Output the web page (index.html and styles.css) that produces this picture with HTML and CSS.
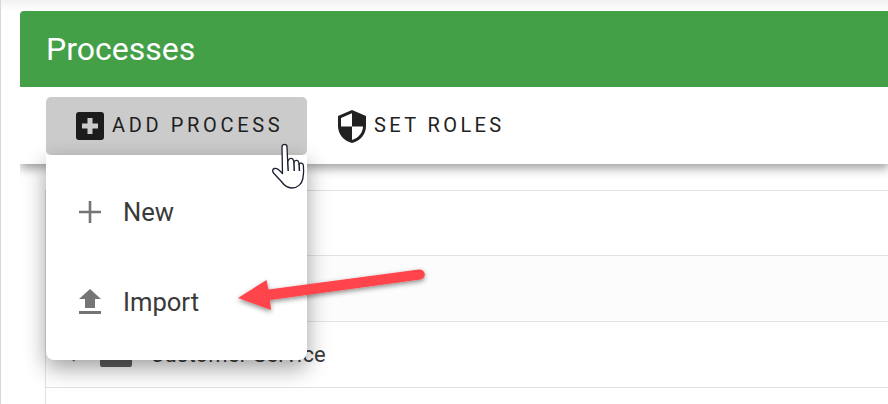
FILE: index.html
```html
<!DOCTYPE html>
<html lang="en">
<head>
<meta charset="utf-8">
<title>Processes</title>
<link rel="stylesheet" href="styles.css">
</head>
<body>
<div class="page">
  <main class="panel">
    <header class="title-bar"><h1>Processes</h1></header>
    <nav class="toolbar">
      <button class="tool tool-active">
        <svg class="tool-icon" viewBox="0 0 28 28"><rect x="0" y="0" width="28" height="28" rx="3" fill="#1c1c1c"/><path d="M11.500 6h5v5.500H22v5h-5.500V22h-5v-5.500H6v-5h5.500z" fill="#cbcbcb"/></svg>
        <span>ADD PROCESS</span>
      </button>
      <button class="tool">
        <svg class="shield-icon" viewBox="0 0 30 35"><path d="M15 1 29 7v10c0 8.500-6 15-14 17C7 32 1 25.500 1 17V7z" fill="#212121"/><path d="M15 4.300 4 9v8.500h11zM15 17.500V31c6.500-2 11-7.500 11-13.500z" fill="#fff"/></svg>
        <span>SET ROLES</span>
      </button>
    </nav>
    <section class="list">
      <div class="row row-first"></div>
      <div class="row row-alt"></div>
      <div class="row">
        <svg class="chevron" viewBox="0 0 10 14"><path d="M2 1l6 6-6 6" fill="none" stroke="#777" stroke-width="2"/></svg>
        <svg class="folder" viewBox="0 0 32 24"><path d="M2 0h10l3 3h15a2 2 0 0 1 2 2v17a2 2 0 0 1-2 2H2a2 2 0 0 1-2-2V2a2 2 0 0 1 2-2z" fill="#616161"/></svg>
        <span class="row-label">Customer Service</span>
      </div>
      <div class="row"></div>
    </section>
  </main>

  <div class="menu">
    <div class="menu-item">
      <svg class="menu-icon" viewBox="0 0 24 24"><path d="M10.700 1h2.600v9.700H23v2.600h-9.700V23h-2.600v-9.700H1v-2.600h9.700z" fill="#757575"/></svg>
      <span>New</span>
    </div>
    <div class="menu-item">
      <svg class="menu-icon" viewBox="0 0 24 24"><path d="M7 18h10V9h6L12 -1 1 9h6zM1 21h22v3H1z" fill="#757575"/></svg>
      <span>Import</span>
    </div>
  </div>

  <svg class="arrow" viewBox="0 0 200 60">
    <defs><filter id="arrow-shadow" x="-10%" y="-30%" width="120%" height="170%"><feDropShadow dx="0" dy="2" stdDeviation="2.500" flood-color="#000" flood-opacity=".45"/></filter></defs>
    <path d="M8 38 36.500 20 38.500 29.500 189 9.500a5 5 0 0 1 1.500 10L40 40 41 50z" fill="#ff444b" filter="url(#arrow-shadow)"/>
  </svg>

  <svg class="cursor" viewBox="0 0 36 46">
    <path d="M10 3c0-3.500 5-3.500 5 0l.7 15 .8-2c1.300-2.500 4.500-2 5 .5l.4 1.500c1.300-2.500 4.400-2 4.900.7l.3 1.300c1.300-1.700 4-1 4.300 1.500.4 4 .3 9-.5 13-1 5-5 9.500-11 9.500-5 0-8-3-10.500-6.500L1.500 29c-1.500-2-1-4 1-4.500 2-.5 3.500.5 5 2l3 3z" fill="#fff" stroke="#1b1f2e" stroke-width="1.300" stroke-linejoin="round"/>
    <path d="M15.700 18l.5 9M21.900 18l.4 9M27.100 20l.3 7" fill="none" stroke="#1b1f2e" stroke-width="1.500"/>
  </svg>
</div>
</body>
</html>
```

FILE: styles.css
```css
* { box-sizing: border-box; }
html, body { margin: 0; height: 100%; }
body {
  background: #fff;
  font-family: Roboto, "Liberation Sans", sans-serif;
  overflow: hidden;
}
.page {
  position: relative;
  width: 888px;
  height: 404px;
  overflow: hidden;
  padding: 11px 0 0 20px;
  border-left: 1px solid #cfdccf;
  background: linear-gradient(#f1f1f1, #fff 11px);
}
.panel {
  margin-left: -1px;
  width: 869px;
  height: 393px;
  display: flex;
  flex-direction: column;
}
.title-bar {
  height: 76px;
  background: #43a047;
  border-radius: 4px 0 0 0;
  padding-left: 26px;
  display: flex;
  align-items: center;
  flex: none;
}
.title-bar h1 {
  margin: 0;
  font-size: 32px;
  font-weight: 400;
  color: #fff;
}
.toolbar {
  height: 77px;
  background: #fff;
  flex: none;
  display: flex;
  align-items: flex-start;
  gap: 16px;
  padding: 10px 0 0 26px;
  box-shadow: 0 4px 10px rgba(0, 0, 0, .4);
  clip-path: inset(0 0 -30px 0);
  position: relative;
  z-index: 1;
}
.tool {
  height: 58px;
  border: 0;
  background: none;
  border-radius: 5px;
  display: flex;
  align-items: center;
  justify-content: center;
  gap: 7px;
  font: 400 20px Roboto, "Liberation Sans", sans-serif;
  letter-spacing: 3.4px;
  color: #222;
  padding: 0 14px;
  white-space: nowrap;
}
.tool span { position: relative; top: -1px; }
.tool-active {
  width: 261px;
  background: #cbcbcb;
  color: #1e1e1e;
  justify-content: flex-start;
  gap: 8px;
  padding: 0 0 0 30px;
  letter-spacing: 3.65px;
}
.tool-icon { width: 28px; height: 28px; flex: none; }
.shield-icon { width: 30px; height: 35px; flex: none; }
.list {
  margin: 26px 0 0 25px;
  border-left: 1px solid #e0e0e0;
  flex: 1;
}
.row {
  height: 66px;
  border-top: 1px solid #e3e3e3;
  display: flex;
  align-items: center;
  padding-left: 25px;
  background: #fff;
}
.row-first { height: 65px; }
.row-alt { background: #fcfcfc; }
.chevron { width: 10px; height: 14px; flex: none; }
.folder { width: 32px; height: 24px; margin-left: 19px; flex: none; }
.row-label { margin-left: 18px; font-size: 22px; color: #3a3a3a; letter-spacing: .2px; }
.menu {
  position: absolute;
  left: 45px;
  top: 155px;
  width: 261px;
  height: 205px;
  background: #fff;
  border-radius: 0 0 8px 8px;
  box-shadow: 0 8px 22px rgba(0, 0, 0, .38);
  z-index: 2;
  padding-top: 12px;
}
.menu-item {
  height: 90px;
  display: flex;
  align-items: center;
  gap: 21px;
  padding-left: 32px;
  font-size: 25.6px;
  color: #3a3a3a;
}
.menu-icon { width: 24px; height: 24px; flex: none; overflow: visible; }
.arrow {
  position: absolute;
  left: 229px;
  top: 260px;
  width: 200px;
  height: 60px;
  overflow: visible;
  z-index: 3;
}
.cursor {
  position: absolute;
  left: 271px;
  top: 144px;
  width: 36px;
  height: 46px;
  overflow: visible;
  z-index: 4;
}
```
